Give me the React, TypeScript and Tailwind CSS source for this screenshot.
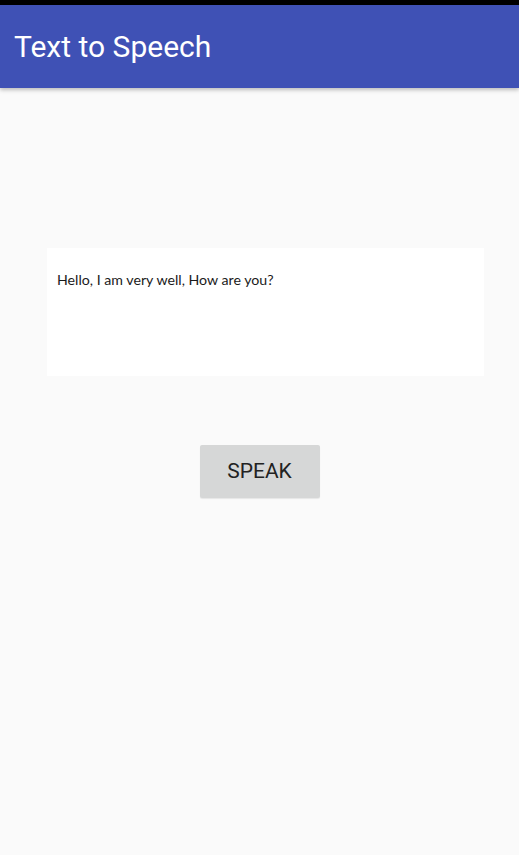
import React from "react";

const App = () => {
  return (
    <div className="w-[519px] h-[855px] bg-[#fafafa] flex flex-col" style={{ fontFamily: "Roboto, sans-serif" }}>
      <div className="h-[5px] bg-black" />
      <header className="h-[83px] bg-[#3f51b5] flex items-center px-[14px] shadow-[0_2px_4px_rgba(0,0,0,0.25)] relative z-10">
        <h1 className="text-[30px] text-white font-[Roboto] leading-none pt-[1px]">Text to Speech</h1>
      </header>
      <main className="flex flex-col items-center">
        <div className="mt-[160px] ml-[12px] w-[437px] h-[128px] bg-white pt-[22px] px-[10px]">
          <p className="text-[14.2px] text-[#1a1a1a] font-['Lato',sans-serif] leading-[20px]">
            Hello, I am very well, How are you?
          </p>
        </div>
        <button className="mt-[69px] w-[120px] h-[53px] bg-[#d6d7d7] rounded-[2px] text-[21px] text-[#222] font-[Roboto] pt-[1px] shadow-[0_1px_1px_rgba(0,0,0,0.08)]">
          SPEAK
        </button>
      </main>
    </div>
  );
};

export default App;
